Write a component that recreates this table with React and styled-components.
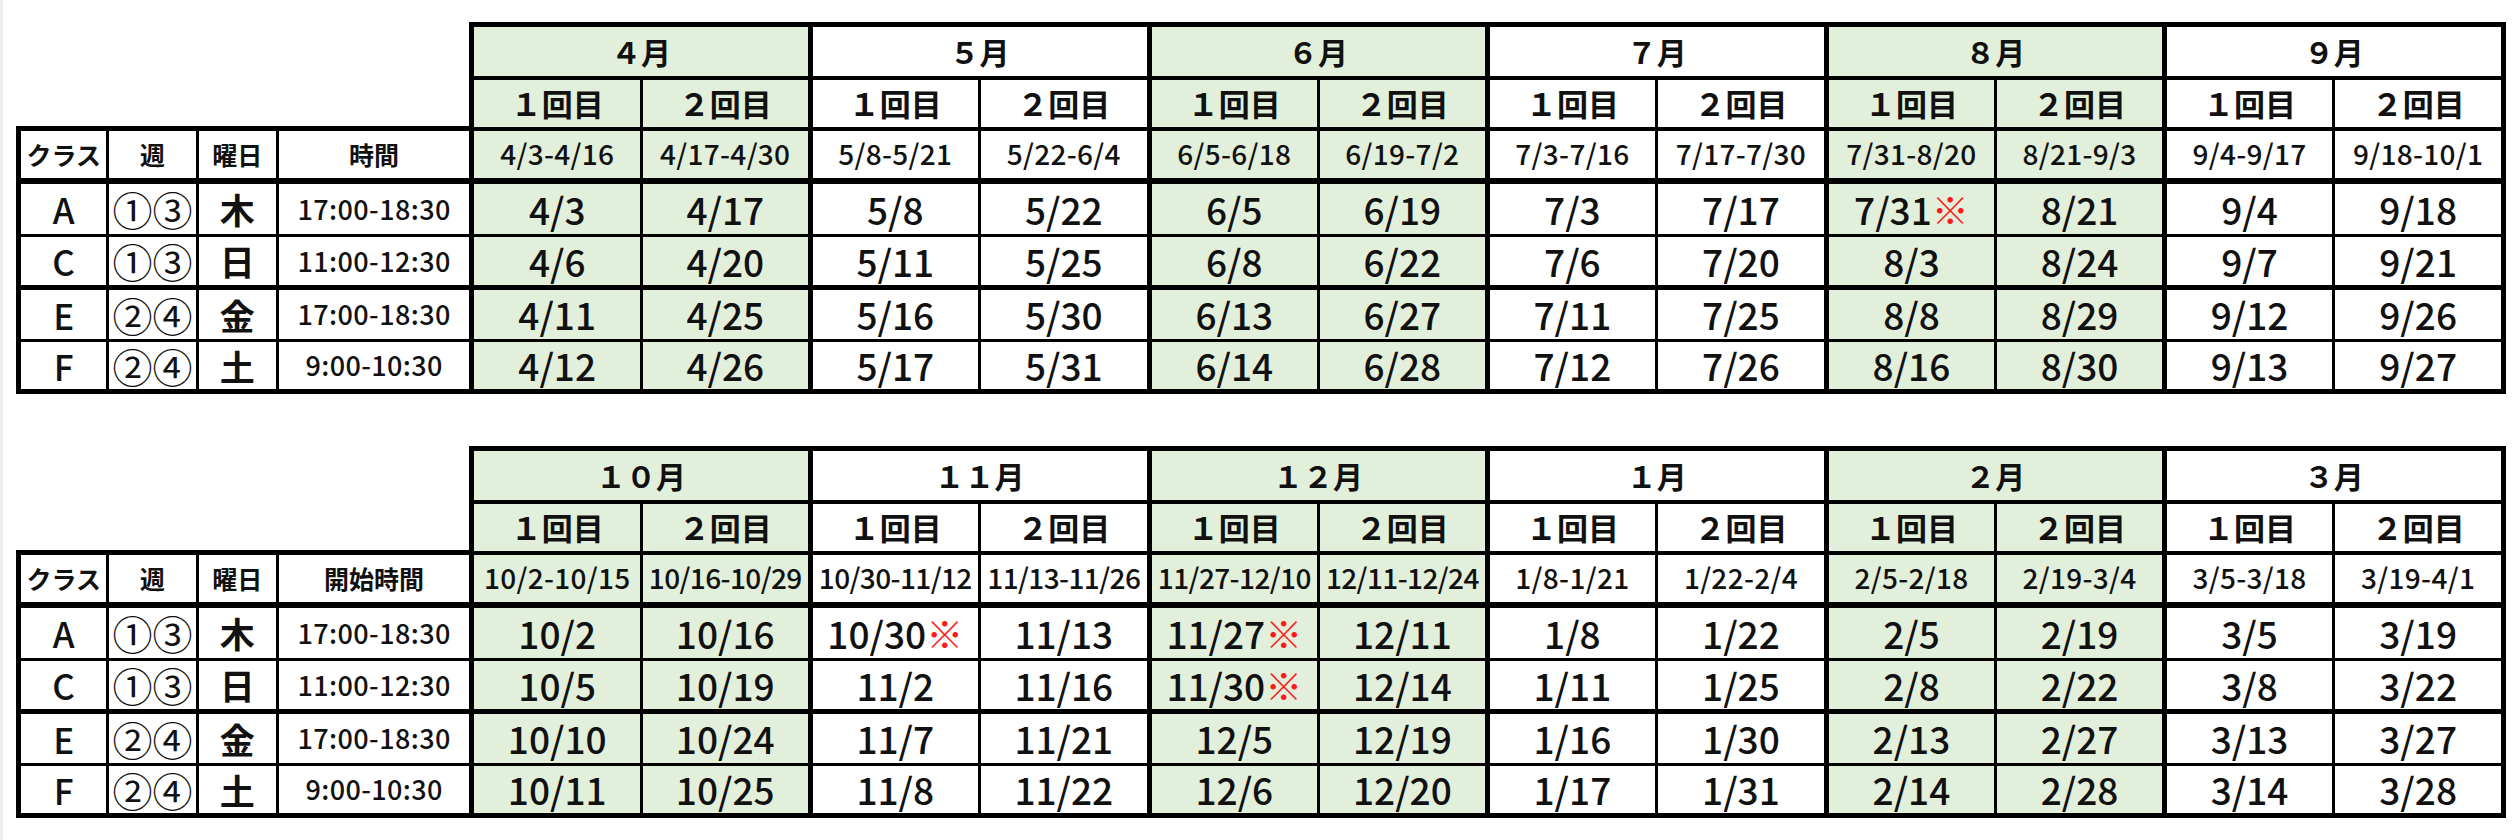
import React from 'react';
import styled, { createGlobalStyle } from 'styled-components';

const GlobalStyle = createGlobalStyle`
  html, body {
    margin: 0;
    padding: 0;
    background: #fff;
  }
  body {
    font-family: "Noto Sans CJK JP", "Noto Sans", sans-serif;
    color: #111;
  }
`;

const Page = styled.div`
  min-height: 840px;
  box-sizing: border-box;
  border-left: 3px solid #ececec;
  padding: 22px 0 0 13px;
  display: flex;
  flex-direction: column;
  gap: 52px;
`;

const Sheet = styled.table`
  border-collapse: collapse;
  table-layout: fixed;
  width: 2490px;
`;

const Col = styled.col`
  width: ${p => p.$w}px;
`;

const Row = styled.tr`
  height: ${p => p.$h}px;
`;

const Cell = styled.td`
  padding: 0;
  text-align: center;
  vertical-align: middle;
  white-space: nowrap;
  background: ${p => (p.$green ? '#e2efda' : '#fff')};
  border-style: solid;
  border-color: #000;
  border-top-width: ${p => p.$t ?? 3}px;
  border-bottom-width: ${p => p.$b ?? 3}px;
  border-left-width: ${p => p.$l ?? 3}px;
  border-right-width: ${p => p.$r ?? 3}px;
  line-height: 1.2;
`;

const Blank = styled.td`
  border: none;
  padding: 0;
  background: transparent;
`;

const MonthCell = styled(Cell)`
  font-size: 30px;
  font-weight: 700;
`;

const RoundCell = styled(Cell)`
  font-size: 31px;
  font-weight: 700;
`;

const HeadCell = styled(Cell)`
  font-size: 25px;
  font-weight: 700;
`;

const RangeCell = styled(Cell)`
  font-size: 28px;
  font-weight: 500;
  letter-spacing: ${p => (p.$tight ? '-0.6px' : '0.3px')};
`;

const ClassCell = styled(Cell)`
  font-size: 35px;
  font-weight: 500;
`;

const WeekCell = styled(Cell)`
  font-size: 40px;
  font-weight: 400;
  line-height: 40px;
`;

const DayCell = styled(Cell)`
  font-size: 35px;
  font-weight: 700;
`;

const TimeCell = styled(Cell)`
  font-size: 27px;
  font-weight: 500;
  letter-spacing: 0.4px;
`;

const DateCell = styled(Cell)`
  font-size: 37px;
  font-weight: 500;
`;

const Mark = styled.span`
  color: #ff1a1a;
  font-weight: 400;
`;

const LABEL_W = [89, 89, 80, 194];
const SUB_W = [169, 168, 169, 169, 169, 168, 169, 169, 169, 168, 169, 169];
const ROW_H = [53, 51, 52, 55, 52, 53, 51];
const DATA_B = [3, 5, 3, 5];

const LABELS = [
  { cls: 'A', week: '①③', day: '木', time: '17:00-18:30' },
  { cls: 'C', week: '①③', day: '日', time: '11:00-12:30' },
  { cls: 'E', week: '②④', day: '金', time: '17:00-18:30' },
  { cls: 'F', week: '②④', day: '土', time: '9:00-10:30' },
];

const FIRST_HALF = {
  timeLabel: '時間',
  months: ['４月', '５月', '６月', '７月', '８月', '９月'],
  ranges: [
    '4/3-4/16', '4/17-4/30', '5/8-5/21', '5/22-6/4', '6/5-6/18', '6/19-7/2',
    '7/3-7/16', '7/17-7/30', '7/31-8/20', '8/21-9/3', '9/4-9/17', '9/18-10/1',
  ],
  rows: [
    ['4/3', '4/17', '5/8', '5/22', '6/5', '6/19', '7/3', '7/17', '7/31※', '8/21', '9/4', '9/18'],
    ['4/6', '4/20', '5/11', '5/25', '6/8', '6/22', '7/6', '7/20', '8/3', '8/24', '9/7', '9/21'],
    ['4/11', '4/25', '5/16', '5/30', '6/13', '6/27', '7/11', '7/25', '8/8', '8/29', '9/12', '9/26'],
    ['4/12', '4/26', '5/17', '5/31', '6/14', '6/28', '7/12', '7/26', '8/16', '8/30', '9/13', '9/27'],
  ],
};

const SECOND_HALF = {
  timeLabel: '開始時間',
  months: ['１０月', '１１月', '１２月', '１月', '２月', '３月'],
  ranges: [
    '10/2-10/15', '10/16-10/29', '10/30-11/12', '11/13-11/26', '11/27-12/10', '12/11-12/24',
    '1/8-1/21', '1/22-2/4', '2/5-2/18', '2/19-3/4', '3/5-3/18', '3/19-4/1',
  ],
  rows: [
    ['10/2', '10/16', '10/30※', '11/13', '11/27※', '12/11', '1/8', '1/22', '2/5', '2/19', '3/5', '3/19'],
    ['10/5', '10/19', '11/2', '11/16', '11/30※', '12/14', '1/11', '1/25', '2/8', '2/22', '3/8', '3/22'],
    ['10/10', '10/24', '11/7', '11/21', '12/5', '12/19', '1/16', '1/30', '2/13', '2/27', '3/13', '3/27'],
    ['10/11', '10/25', '11/8', '11/22', '12/6', '12/20', '1/17', '1/31', '2/14', '2/28', '3/14', '3/28'],
  ],
};

// months 1, 3, 5 (0-based 0, 2, 4) are shaded green
const isGreen = i => Math.floor(i / 2) % 2 === 0;

function DateText({ text }) {
  if (text.endsWith('※')) {
    return (
      <>
        {text.slice(0, -1)}
        <Mark>※</Mark>
      </>
    );
  }
  return text;
}

function Schedule({ data }) {
  const subEdges = i => (i % 2 === 0 ? { $l: 5, $r: 3 } : { $l: 3, $r: 5 });
  return (
    <Sheet>
      <colgroup>
        {LABEL_W.map((w, i) => <Col key={'l' + i} $w={w} />)}
        {SUB_W.map((w, i) => <Col key={'s' + i} $w={w} />)}
      </colgroup>
      <tbody>
        <Row $h={ROW_H[0]}>
          <Blank colSpan={4} />
          {data.months.map((m, i) => (
            <MonthCell key={m} colSpan={2} $green={i % 2 === 0} $t={5} $b={4} $l={5} $r={5}>
              {m}
            </MonthCell>
          ))}
        </Row>
        <Row $h={ROW_H[1]}>
          <Blank colSpan={4} />
          {data.ranges.map((_, i) => (
            <RoundCell key={i} $green={isGreen(i)} $t={4} $b={4} {...subEdges(i)}>
              {i % 2 === 0 ? '１回目' : '２回目'}
            </RoundCell>
          ))}
        </Row>
        <Row $h={ROW_H[2]}>
          <HeadCell $t={5} $b={6} $l={5}>クラス</HeadCell>
          <HeadCell $t={5} $b={6}>週</HeadCell>
          <HeadCell $t={5} $b={6}>曜日</HeadCell>
          <HeadCell $t={5} $b={6} $r={5}>{data.timeLabel}</HeadCell>
          {data.ranges.map((r, i) => (
            <RangeCell key={r} $green={isGreen(i)} $t={4} $b={6} $tight={r.length > 10} {...subEdges(i)}>
              {r}
            </RangeCell>
          ))}
        </Row>
        {LABELS.map((lab, r) => (
          <Row key={lab.cls} $h={ROW_H[3 + r]}>
            <ClassCell $b={DATA_B[r]} $l={5}>{lab.cls}</ClassCell>
            <WeekCell $b={DATA_B[r]}>{lab.week}</WeekCell>
            <DayCell $b={DATA_B[r]}>{lab.day}</DayCell>
            <TimeCell $b={DATA_B[r]} $r={5}>{lab.time}</TimeCell>
            {data.rows[r].map((d, i) => (
              <DateCell key={i} $green={isGreen(i)} $b={DATA_B[r]} {...subEdges(i)}>
                <DateText text={d} />
              </DateCell>
            ))}
          </Row>
        ))}
      </tbody>
    </Sheet>
  );
}

export default function App() {
  return (
    <>
      <GlobalStyle />
      <Page>
        <Schedule data={FIRST_HALF} />
        <Schedule data={SECOND_HALF} />
      </Page>
    </>
  );
}
